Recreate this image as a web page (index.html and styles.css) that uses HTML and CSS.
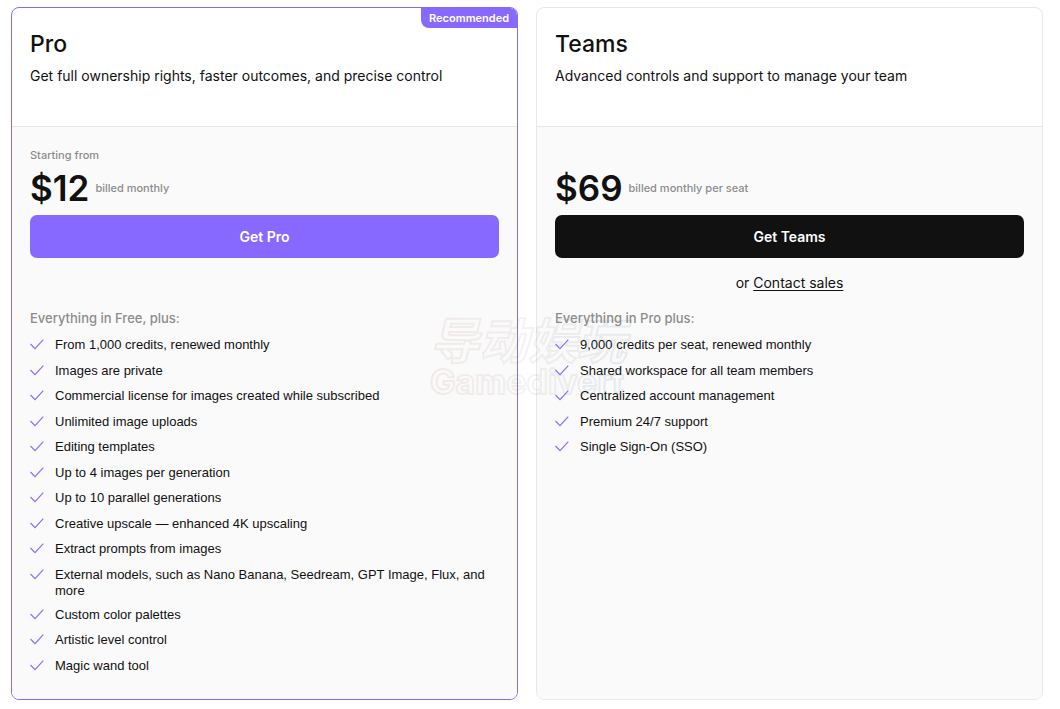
FILE: index.html
```html
<!DOCTYPE html>
<html lang="en">
<head>
  <meta charset="UTF-8">
  <title>Plans</title>
  <meta name="viewport" content="width=device-width, initial-scale=1.0">
  <link rel="stylesheet" href="styles.css">
</head>
<body>
  <!-- Check icon shared by both lists -->
  <svg class="sprite" width="0" height="0" aria-hidden="true">
    <symbol id="check" viewBox="0 0 14 19">
      <path d="M0.5 7 L5 11.6 L13.3 2.6" fill="none" stroke="currentColor" stroke-width="1.1"/>
    </symbol>
  </svg>

  <main class="plans">
    <!-- Pro -->
    <section class="plan plan-pro">
      <span class="badge">Recommended</span>
      <header class="plan-header">
        <h2>Pro</h2>
        <p>Get full ownership rights, faster outcomes, and precise control</p>
      </header>
      <div class="plan-body">
        <p class="starting">Starting from</p>
        <div class="price">
          <strong>$12</strong>
          <span>billed monthly</span>
        </div>
        <button type="button" class="btn btn-pro">Get Pro</button>
        <p class="contact"></p>
        <h3>Everything in Free, plus:</h3>
        <ul class="features">
          <li><svg><use href="#check"/></svg><span>From 1,000 credits, renewed monthly</span></li>
          <li><svg><use href="#check"/></svg><span>Images are private</span></li>
          <li><svg><use href="#check"/></svg><span>Commercial license for images created while subscribed</span></li>
          <li><svg><use href="#check"/></svg><span>Unlimited image uploads</span></li>
          <li><svg><use href="#check"/></svg><span>Editing templates</span></li>
          <li><svg><use href="#check"/></svg><span>Up to 4 images per generation</span></li>
          <li><svg><use href="#check"/></svg><span>Up to 10 parallel generations</span></li>
          <li><svg><use href="#check"/></svg><span>Creative upscale — enhanced 4K upscaling</span></li>
          <li><svg><use href="#check"/></svg><span>Extract prompts from images</span></li>
          <li><svg><use href="#check"/></svg><span>External models, such as Nano Banana, Seedream, GPT Image, Flux, and more</span></li>
          <li><svg><use href="#check"/></svg><span>Custom color palettes</span></li>
          <li><svg><use href="#check"/></svg><span>Artistic level control</span></li>
          <li><svg><use href="#check"/></svg><span>Magic wand tool</span></li>
        </ul>
      </div>
    </section>

    <!-- Teams -->
    <section class="plan">
      <header class="plan-header">
        <h2>Teams</h2>
        <p>Advanced controls and support to manage your team</p>
      </header>
      <div class="plan-body">
        <p class="starting"></p>
        <div class="price">
          <strong>$69</strong>
          <span>billed monthly per seat</span>
        </div>
        <button type="button" class="btn btn-teams">Get Teams</button>
        <p class="contact">or <a href="#">Contact sales</a></p>
        <h3>Everything in Pro plus:</h3>
        <ul class="features">
          <li><svg><use href="#check"/></svg><span>9,000 credits per seat, renewed monthly</span></li>
          <li><svg><use href="#check"/></svg><span>Shared workspace for all team members</span></li>
          <li><svg><use href="#check"/></svg><span>Centralized account management</span></li>
          <li><svg><use href="#check"/></svg><span>Premium 24/7 support</span></li>
          <li><svg><use href="#check"/></svg><span>Single Sign-On (SSO)</span></li>
        </ul>
      </div>
    </section>

    <!-- Watermark over both cards -->
    <svg class="watermark" viewBox="0 0 210 90" aria-hidden="true">
      <defs>
        <linearGradient id="fade" gradientUnits="userSpaceOnUse" x1="0" y1="0" x2="200" y2="0">
          <stop offset="0" stop-color="#b4644b" stop-opacity="0.11"/>
          <stop offset="0.45" stop-color="#78645f" stop-opacity="0.08"/>
          <stop offset="1" stop-color="#3c6482" stop-opacity="0.11"/>
        </linearGradient>
      </defs>
      <text class="watermark-cn" x="0" y="49" lang="zh">导动娱玩</text>
      <text class="watermark-en" x="0" y="84">Gamedivert</text>
    </svg>
  </main>
</body>
</html>
```

FILE: styles.css
```css
* {
  box-sizing: border-box;
}

body {
  margin: 0;
  background: #fff;
  color: #111;
  font-family: Inter, "Liberation Sans", sans-serif;
}

h2,
h3,
p,
ul {
  margin: 0;
  padding: 0;
}

.sprite {
  position: absolute;
}

.plans {
  position: relative;
  display: grid;
  grid-template-columns: 1fr 1fr;
  gap: 18px;
  padding: 7px 17px 9px 11px;
}

.plan {
  position: relative;
  display: flex;
  flex-direction: column;
  border: 1px solid #e8e8e8;
  border-radius: 8px;
  overflow: hidden;
}

.plan-pro {
  border-color: #8769ff;
}

.badge {
  position: absolute;
  top: 0;
  right: 0;
  padding: 0 8px;
  border-bottom-left-radius: 8px;
  background: #8769ff;
  color: #fff;
  font-size: 11px;
  font-weight: 600;
  line-height: 20px;
}

.plan-header {
  padding: 20px 18px 40px;
  border-bottom: 1px solid #e8e8e8;
}

.plan-header h2 {
  font-size: 23px;
  font-weight: 500;
  line-height: 32px;
}

.plan-header p {
  padding-top: 6px;
  font-size: 14px;
  line-height: 20px;
}

.plan-body {
  flex: 1;
  padding: 20px 18px 22px;
  background: #fafafa;
}

.starting {
  min-height: 16px;
  color: #8c8c8c;
  font-size: 11px;
  font-weight: 500;
  line-height: 16px;
}

.price {
  display: flex;
  align-items: center;
  gap: 6px;
  height: 52px;
  padding-bottom: 2px;
}

.price strong {
  font-size: 35px;
  font-weight: 600;
}

.price span {
  color: #8c8c8c;
  font-size: 11px;
  font-weight: 500;
}

.btn {
  width: 100%;
  height: 43px;
  border: 0;
  border-radius: 7px;
  color: #fff;
  font-family: inherit;
  font-size: 14px;
  font-weight: 600;
  cursor: pointer;
}

.btn-pro {
  background: #8769ff;
}

.btn-teams {
  background: #111;
}

.contact {
  min-height: 52px;
  padding-top: 15px;
  font-size: 14px;
  line-height: 20px;
  text-align: center;
}

.contact a {
  color: inherit;
  text-underline-offset: 2px;
}

.plan-body h3 {
  color: #8c8c8c;
  font-size: 13px;
  font-weight: 500;
  line-height: 16px;
}

.features {
  display: flex;
  flex-direction: column;
  gap: 0.5em;
  padding-top: 11px;
  font-family: "Liberation Sans", Arial, sans-serif;
  font-size: 13px;
  line-height: 1.3;
  list-style: none;
}

.features li {
  display: flex;
  gap: 11px;
}

.features svg {
  flex: none;
  width: 14px;
  height: 19px;
  color: #8769ff;
}

.watermark {
  position: absolute;
  top: 310px;
  left: 430px;
  width: 210px;
  height: 90px;
  fill: none;
  stroke: url(#fade);
  stroke-width: 2px;
  font-weight: 700;
  pointer-events: none;
}

.watermark-cn {
  font-family: "Noto Sans CJK SC", sans-serif;
  font-size: 49px;
  font-style: italic;
}

.watermark-en {
  font-size: 34px;
}
```
